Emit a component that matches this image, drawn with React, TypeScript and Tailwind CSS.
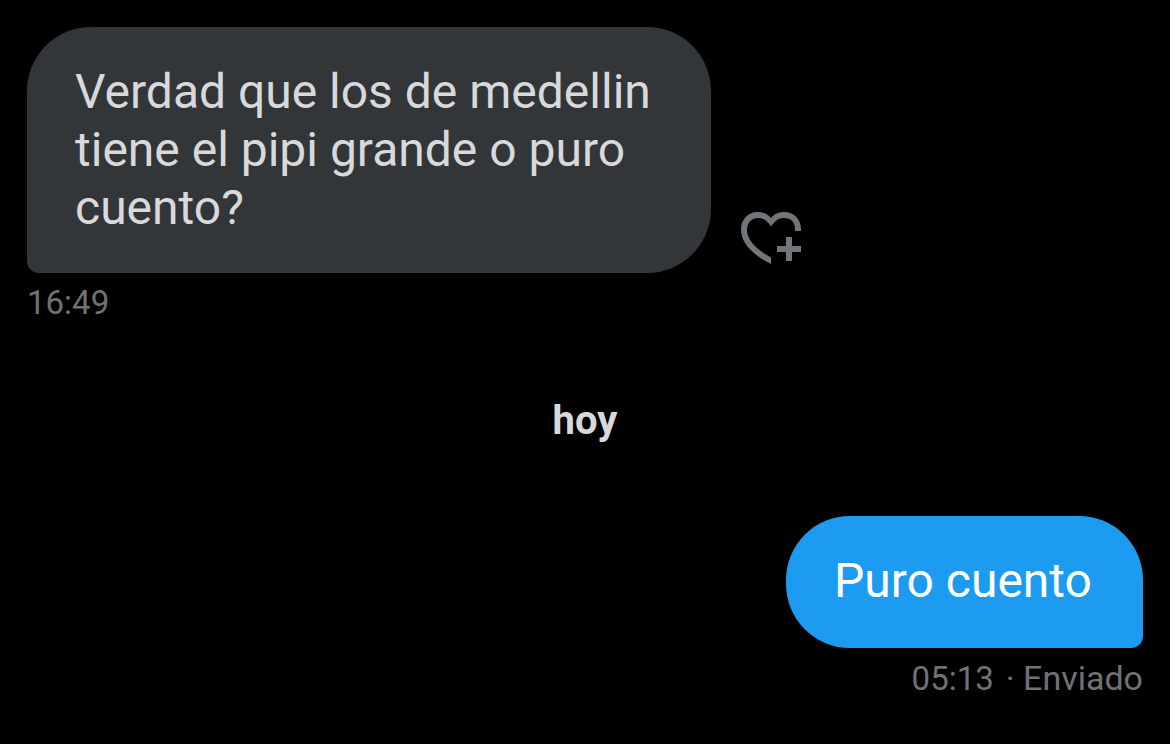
export default function App() {
  return (
    <main className="min-h-screen bg-black px-[27px] pt-[27px] pb-12 font-['Roboto',sans-serif] text-[#717276]">
      <section className="flex flex-col items-start">
        <div className="flex items-end gap-[30px]">
          <p className="max-w-[684px] rounded-[64px] rounded-bl-[12px] bg-[#333639] px-12 py-9 text-[48px] leading-[58px] text-[#d9d9dc]">
            Verdad que los de medellin tiene el pipi grande o puro cuento?
          </p>
          <button type="button" aria-label="Me gusta" className="mb-[9px] shrink-0 text-[#71767b]">
            <svg className="block" width="60" height="52" viewBox="0 0 60 52" fill="currentColor" aria-hidden="true">
              <path d="M30 52C12 43 0 31 0 18C0 7 7 0 17 0C22 0 27 2 30 6C33 2 38 0 43 0C53 0 60 7 60 17V19H54V17C54 10 50 6 43 6C38 6 34 8.500 30 14.500C26 8.500 22 6 17 6C10 6 6 11 6 18C6 27.500 15 37.500 30 45.500Z" />
              <path d="M45 25H51V34H60V40H51V49H45V40H36V34H45Z" />
            </svg>
          </button>
        </div>
        <time className="mt-2 text-[33px] leading-[44px]">16:49</time>
      </section>
      <h2 className="mt-[72px] text-center text-[40px] leading-[48px] font-bold text-[#d9d9dc]">hoy</h2>
      <section className="mt-[71px] flex flex-col items-end">
        <p className="min-w-[357px] rounded-[64px] rounded-br-[12px] bg-[#1d9bf0] px-12 pt-9 pb-[38px] text-[48px] leading-[58px] text-white">
          Puro cuento
        </p>
        <p className="mt-2 flex items-baseline gap-3 leading-[44px]">
          <time className="text-[33px]">05:13</time>
          <span className="text-[34px]">· Enviado</span>
        </p>
      </section>
    </main>
  );
}
